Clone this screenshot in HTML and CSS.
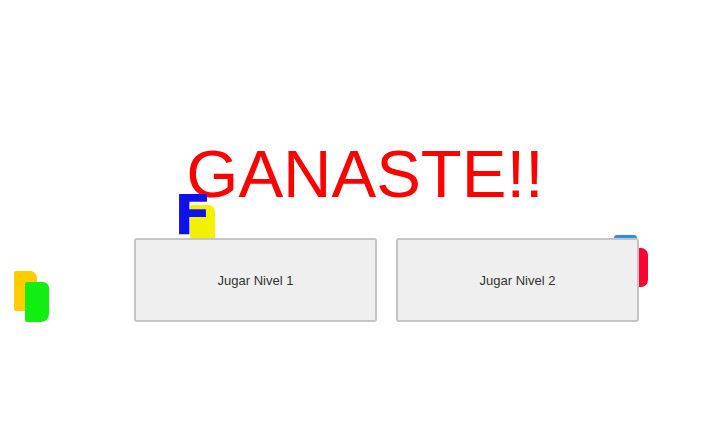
FILE: index.html
```html
<!DOCTYPE html>
<html lang="es">
<head>
<meta charset="utf-8">
<title>Ganaste</title>
<link rel="stylesheet" href="styles.css">
</head>
<body>
<div class="stage">
  <div class="piece piece-yellow-left"></div>
  <div class="piece piece-green"></div>
  <div class="piece piece-yellow"></div>
  <div class="piece-letter">F</div>
  <div class="piece piece-blue-bar"></div>
  <div class="piece piece-red"></div>

  <h1 class="title">GANASTE!!</h1>
  <div class="buttons">
    <button class="level-btn">Jugar Nivel 1</button>
    <button class="level-btn">Jugar Nivel 2</button>
  </div>
</div>
</body>
</html>
```

FILE: styles.css
```css
html, body {
  margin: 0;
  padding: 0;
  background: #ffffff;
}

.stage {
  position: relative;
  width: 724px;
  height: 430px;
  overflow: hidden;
  padding-top: 140px;
  box-sizing: border-box;
  font-family: "Liberation Sans", Arial, sans-serif;
}

.title {
  margin: 0;
  padding-left: 6px;
  font-size: 67px;
  line-height: 67px;
  font-weight: normal;
  color: #ff0000;
  text-align: center;
}

.buttons {
  display: flex;
  gap: 19px;
  margin-top: 31px;
  padding-left: 134px;
}

.level-btn {
  position: relative;
  width: 243px;
  height: 84px;
  box-sizing: border-box;
  background: #efefef;
  border: 2px solid #c4c4c4;
  border-radius: 3px;
  font-family: "Liberation Sans", Arial, sans-serif;
  font-size: 13px;
  color: #333333;
  padding: 0;
}

.piece {
  position: absolute;
}

.piece-yellow-left {
  left: 14px;
  top: 271px;
  width: 23px;
  height: 40px;
  background: #ffcc00;
  border-radius: 2px 7px 2px 2px;
}

.piece-green {
  left: 25px;
  top: 282px;
  width: 24px;
  height: 40px;
  background: #11ee11;
  border-radius: 2px 6px 8px 2px;
}

.piece-yellow {
  left: 190px;
  top: 205px;
  width: 25px;
  height: 40px;
  background: #f2f200;
  border-radius: 2px 7px 2px 2px;
}

.piece-letter {
  position: absolute;
  left: 174px;
  top: 195px;
  font-family: "DejaVu Sans", sans-serif;
  font-weight: bold;
  font-size: 55px;
  line-height: 40px;
  color: #1010ee;
}

.piece-blue-bar {
  left: 614px;
  top: 235px;
  width: 23px;
  height: 8px;
  background: #2b8fe6;
  border-radius: 3px;
}

.piece-red {
  left: 620px;
  top: 248px;
  width: 28px;
  height: 39px;
  background: #ff0033;
  border-radius: 2px 7px 7px 2px;
}
```
